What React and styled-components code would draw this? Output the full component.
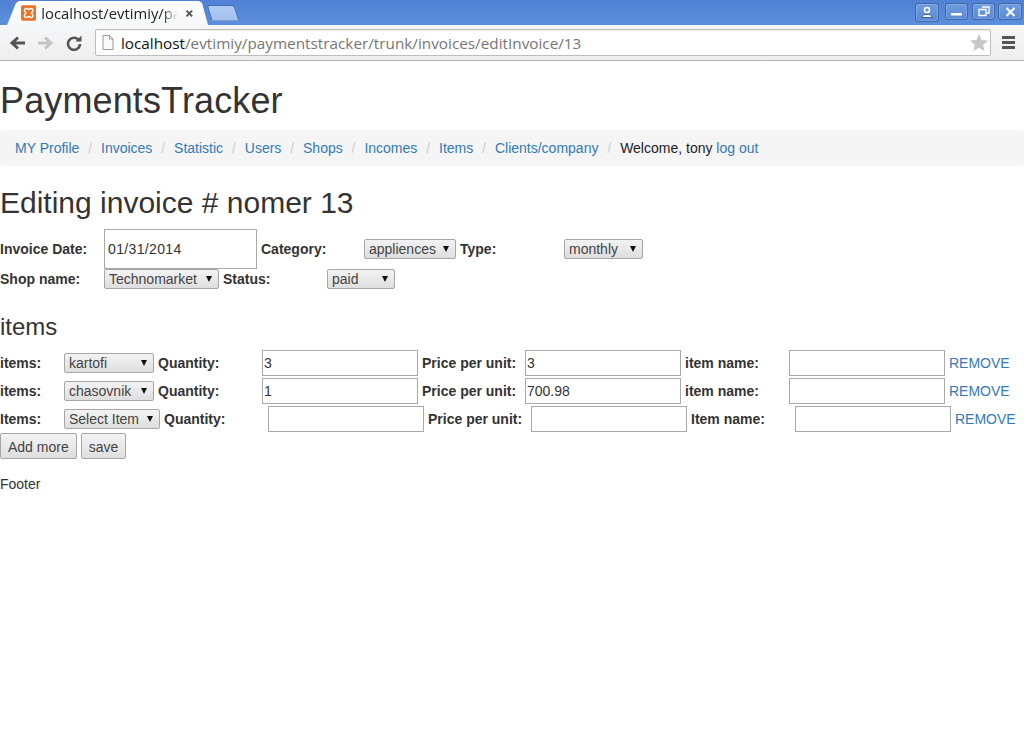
import React from 'react';
import styled, { createGlobalStyle } from 'styled-components';

const GlobalStyle = createGlobalStyle`
  html, body { margin: 0; padding: 0; background: #fff; }
  body { font-family: "Liberation Sans", Arial, sans-serif; font-size: 14px; line-height: 20px; color: #333; }
`;

const Page = styled.div`
  width: 1024px;
  height: 742px;
  overflow: hidden;
`;

/* browser chrome */
const TitleBar = styled.div`
  height: 25px;
  background: linear-gradient(#4f80d3, #5d8fdc);
  display: flex;
  align-items: flex-end;
  padding-left: 7px;
  justify-content: space-between;
`;

const Tabs = styled.div`
  display: flex;
  align-items: flex-end;
`;

const Tab = styled.div`
  width: 201px;
  height: 24px;
  box-sizing: border-box;
  padding: 0 14px;
  background: linear-gradient(#fff, #f6f7f9);
  clip-path: polygon(0 100%, 9px 2px, 12px 0, 192px 0, 195px 2px, 100% 100%);
  display: flex;
  align-items: center;
  gap: 5px;
  font-family: "Open Sans", sans-serif;
  font-size: 14.8px;
  color: #222;
  white-space: nowrap;
`;

const TabTitle = styled.span`
  width: 139px;
  -webkit-mask-image: linear-gradient(90deg, #000 122px, transparent 137px);
  mask-image: linear-gradient(90deg, #000 122px, transparent 137px);
`;

const NewTab = styled.div`
  width: 26px;
  height: 14px;
  margin-left: 1px;
  margin-bottom: 4px;
  background: linear-gradient(#aecbf3, #a2c1ee);
  border: 1px solid #3f6db5;
  border-bottom-color: #7fa0d4;
  border-radius: 3px 3px 1px 1px;
  transform: skewX(18deg);
`;

const WindowButtons = styled.div`
  display: flex;
  align-self: flex-start;
  margin-right: 2px;
`;

const WinButton = styled.div`
  width: ${(p) => p.$w || 23}px;
  height: ${(p) => p.$h || 17}px;
  margin-top: ${(p) => p.$top || 3}px;
  margin-right: ${(p) => p.$gap || 0}px;
  box-sizing: border-box;
  border: 1px solid #3f68a8;
  border-radius: 3px;
  background: linear-gradient(#6f9ce0, #5a8ad6);
  box-shadow: inset 0 0 0 1px rgba(255, 255, 255, 0.18);
  display: flex;
  align-items: center;
  justify-content: center;
`;

const Toolbar = styled.div`
  height: 36px;
  box-sizing: border-box;
  padding: 4px 9px 0 7px;
  border-bottom: 1px solid #b5b5b5;
  background: linear-gradient(#f6f7f9, #eeeeee);
  display: flex;
  align-items: flex-start;
`;

const NavIcon = styled.div`
  width: ${(p) => p.$w || 29}px;
  height: 28px;
  display: flex;
  align-items: center;
  justify-content: flex-start;
`;

const Omnibox = styled.div`
  width: 897px;
  height: 27px;
  margin-left: 4px;
  box-sizing: border-box;
  border: 1px solid #bdbdbd;
  border-radius: 2px;
  background: #fff;
  box-shadow: inset 0 1px 1px rgba(0, 0, 0, 0.06);
  display: flex;
  align-items: center;
  padding: 0 2px 0 6px;
  font-family: "Open Sans", sans-serif;
  font-size: 15.3px;
  color: #767676;
  white-space: nowrap;
`;

const Host = styled.span`
  color: #111;
`;

const Url = styled.span`
  flex: 1;
  margin-left: 7px;
`;

const Menu = styled.div`
  margin: 7px 0 0 11px;
  width: 13px;
  height: 13px;
  background: repeating-linear-gradient(#555 0 3px, transparent 3px 5px);
`;

/* page content */
const Content = styled.div`
  padding-top: 17px;
`;

const Brand = styled.h1`
  margin: 0;
  font-size: 36px;
  line-height: 46px;
  font-weight: 500;
  letter-spacing: 0.13px;
  color: #333;
`;

const Breadcrumb = styled.ul`
  list-style: none;
  margin: 6px 0 0;
  padding: 8px 15px;
  height: 36px;
  box-sizing: border-box;
  background: #f5f5f5;
  border-radius: 4px;
  display: flex;
  color: #222;
`;

const Crumb = styled.li`
  white-space: pre;
  & + &::before {
    content: "/";
    padding: 0 9px 0 8.8px;
    color: #ccc;
  }
`;

const Link = styled.a`
  color: #337ab7;
  text-decoration: none;
`;

const PageTitle = styled.h2`
  margin: 20px 0 0;
  font-size: 30px;
  line-height: 33px;
  font-weight: 500;
  color: #333;
`;

const FormRow = styled.div`
  display: flex;
  align-items: center;
  gap: 4px;
  margin-top: ${(p) => p.$top || 0}px;
  height: ${(p) => p.$h || 28}px;
`;

const Label = styled.label`
  width: ${(p) => p.$w || 100}px;
  font-weight: 700;
  white-space: nowrap;
  color: #333;
`;

const Input = styled.input`
  width: ${(p) => p.$w || 156}px;
  height: ${(p) => p.$h || 26}px;
  box-sizing: border-box;
  padding: 0 ${(p) => (p.$tall ? 3 : 1)}px;
  border: 1px solid #a9a9a9;
  border-radius: 0;
  outline: none;
  font: 14px "Liberation Sans", Arial, sans-serif;
  letter-spacing: ${(p) => (p.$tall ? 0.35 : 0)}px;
  color: #333;
  background: #fff;
`;

const Select = styled.div`
  width: ${(p) => p.$w}px;
  height: 20px;
  box-sizing: border-box;
  padding: 0 4px;
  border: 1px solid #a6a6a6;
  border-radius: 2px;
  background: linear-gradient(#f3f3f3, #dedede);
  display: flex;
  align-items: center;
  justify-content: space-between;
  color: #444;
  white-space: nowrap;
`;

const Caret = styled.span`
  width: 0;
  height: 0;
  margin-right: 2px;
  border-left: 3.5px solid transparent;
  border-right: 3.5px solid transparent;
  border-top: 6px solid #111;
`;

const SectionTitle = styled.h3`
  margin: 25px 0 9px;
  font-size: 24px;
  line-height: 26px;
  font-weight: 500;
  color: #333;
`;

const Actions = styled.div`
  display: flex;
  gap: 4px;
`;

const Button = styled.button`
  height: 26px;
  box-sizing: border-box;
  padding: 1px 7px 0;
  border: 1px solid #a6a6a6;
  border-radius: 2px;
  background: linear-gradient(#f4f4f4, #dedede);
  font: 14px "Liberation Sans", Arial, sans-serif;
  color: #444;
`;

const Footer = styled.p`
  margin: 15px 0 0;
  color: #333;
`;

const crumbs = ['MY Profile', 'Invoices', 'Statistic', 'Users', 'Shops', 'Incomes', 'Items', 'Clients/company'];

const Dropdown = ({ w, children }) => (
  <Select $w={w}>
    {children}
    <Caret />
  </Select>
);

const ItemRow = ({ labels, selectWidth, item, qty, price }) => (
  <FormRow>
    <Label $w={60}>{labels[0]}</Label>
    <Dropdown w={selectWidth}>{item}</Dropdown>
    <Label>Quantity:</Label>
    <Input defaultValue={qty} />
    <Label $w={99}>Price per unit:</Label>
    <Input defaultValue={price} />
    <Label>{labels[1]}</Label>
    <Input defaultValue="" />
    <Link href="#">REMOVE</Link>
  </FormRow>
);

export default function App() {
  return (
    <Page>
      <GlobalStyle />
      <TitleBar>
        <Tabs>
          <Tab>
            <svg width="16" height="16" viewBox="0 0 16 16">
              <rect width="16" height="16" rx="2" fill="#e8742a" />
              <path d="M3.500 5.500a2 2 0 0 1 3.500-1.500h2a2 2 0 0 1 3.500 1.500L11 8l1.500 2.500a2 2 0 0 1-3.500 1.500H7a2 2 0 0 1-3.500-1.500L5 8z" fill="none" stroke="#fff" strokeWidth="1.500" />
            </svg>
            <TabTitle>localhost/evtimiy/pa</TabTitle>
            <svg width="9" height="9" viewBox="0 0 9 9">
              <path d="M1.500 1.500l6 6M7.500 1.500l-6 6" stroke="#555" strokeWidth="2" />
            </svg>
          </Tab>
          <NewTab />
        </Tabs>
        <WindowButtons>
          <WinButton $w={24} $h={19} $top={0} $gap={6}>
            <svg width="14" height="13" viewBox="0 0 14 13">
              <circle cx="7" cy="4" r="2.500" fill="none" stroke="#fff" strokeWidth="1.500" />
              <path d="M2 11.500c0-2.500 2-3 5-3s5 .5 5 3z" fill="#fff" stroke="#17315e" strokeWidth=".7" />
            </svg>
          </WinButton>
          <WinButton $gap={4}>
            <svg width="11" height="9" viewBox="0 0 11 9"><rect y="6" width="11" height="2.500" fill="#fff" /></svg>
          </WinButton>
          <WinButton $gap={3}>
            <svg width="12" height="11" viewBox="0 0 12 11">
              <path d="M4 1h7v6H8M1 3.500h7v6H1z" fill="none" stroke="#fff" strokeWidth="1.300" />
            </svg>
          </WinButton>
          <WinButton $w={24}>
            <svg width="11" height="10" viewBox="0 0 11 10">
              <path d="M1.500 1l8 8M9.500 1l-8 8" stroke="#fff" strokeWidth="2" />
            </svg>
          </WinButton>
        </WindowButtons>
      </TitleBar>
      <Toolbar>
        <NavIcon>
          <svg width="18" height="14" viewBox="0 0 18 14" style={{ marginLeft: 2 }}>
            <path d="M16 7H4M9 1.500L3 7l6 5.500" fill="none" stroke="#555" strokeWidth="3" />
          </svg>
        </NavIcon>
        <NavIcon>
          <svg width="18" height="14" viewBox="0 0 18 14">
            <path d="M2 7h12M9 1.500L15 7l-6 5.500" fill="none" stroke="#c4c4c4" strokeWidth="3" />
          </svg>
        </NavIcon>
        <NavIcon $w={26}>
          <svg width="16" height="16" viewBox="0 0 16 16" style={{ marginLeft: 1 }}>
            <path d="M13 5.500A6 6 0 1 0 14 9" fill="none" stroke="#555" strokeWidth="2.600" />
            <path d="M9.500 6.500H15.500V0.500z" fill="#555" />
          </svg>
        </NavIcon>
        <Omnibox>
          <svg width="12" height="15" viewBox="0 0 12 15">
            <path d="M1 .5h6.500L11 4v10.500H1z M7.500 .5V4H11" fill="#fafafa" stroke="#999" />
          </svg>
          <Url><Host>localhost</Host>/evtimiy/paymentstracker/trunk/invoices/editInvoice/13</Url>
          <svg width="18" height="17" viewBox="0 0 18 17">
            <path d="M9 0l2.600 5.900 6.400.6-4.800 4.200 1.400 6.300L9 13.700 3.400 17l1.400-6.300L0 6.500l6.400-.6z" fill="#c8c8c8" />
          </svg>
        </Omnibox>
        <Menu />
      </Toolbar>
      <Content>
        <Brand>PaymentsTracker</Brand>
        <Breadcrumb>
          {crumbs.map((c) => (
            <Crumb key={c}><Link href="#">{c}</Link></Crumb>
          ))}
          <Crumb>Welcome, tony <Link href="#">log out</Link></Crumb>
        </Breadcrumb>
        <PageTitle>Editing invoice # nomer 13</PageTitle>
        <FormRow $top={10} $h={40}>
          <Label>Invoice Date:</Label>
          <Input $h={40} $w={153} $tall defaultValue="01/31/2014" />
          <Label $w={99}>Category:</Label>
          <Dropdown w={92}>appliences</Dropdown>
          <Label>Type:</Label>
          <Dropdown w={79}>monthly</Dropdown>
        </FormRow>
        <FormRow $h={20}>
          <Label>Shop name:</Label>
          <Dropdown w={115}>Technomarket</Dropdown>
          <Label>Status:</Label>
          <Dropdown w={68}>paid</Dropdown>
        </FormRow>
        <SectionTitle>items</SectionTitle>
        <ItemRow labels={['items:', 'item name:']} selectWidth={90} item="kartofi" qty="3" price="3" />
        <ItemRow labels={['items:', 'item name:']} selectWidth={90} item="chasovnik" qty="1" price="700.98" />
        <ItemRow labels={['Items:', 'Item name:']} selectWidth={96} item="Select Item" qty="" price="" />
        <Actions>
          <Button>Add more</Button>
          <Button>save</Button>
        </Actions>
        <Footer>Footer</Footer>
      </Content>
    </Page>
  );
}
